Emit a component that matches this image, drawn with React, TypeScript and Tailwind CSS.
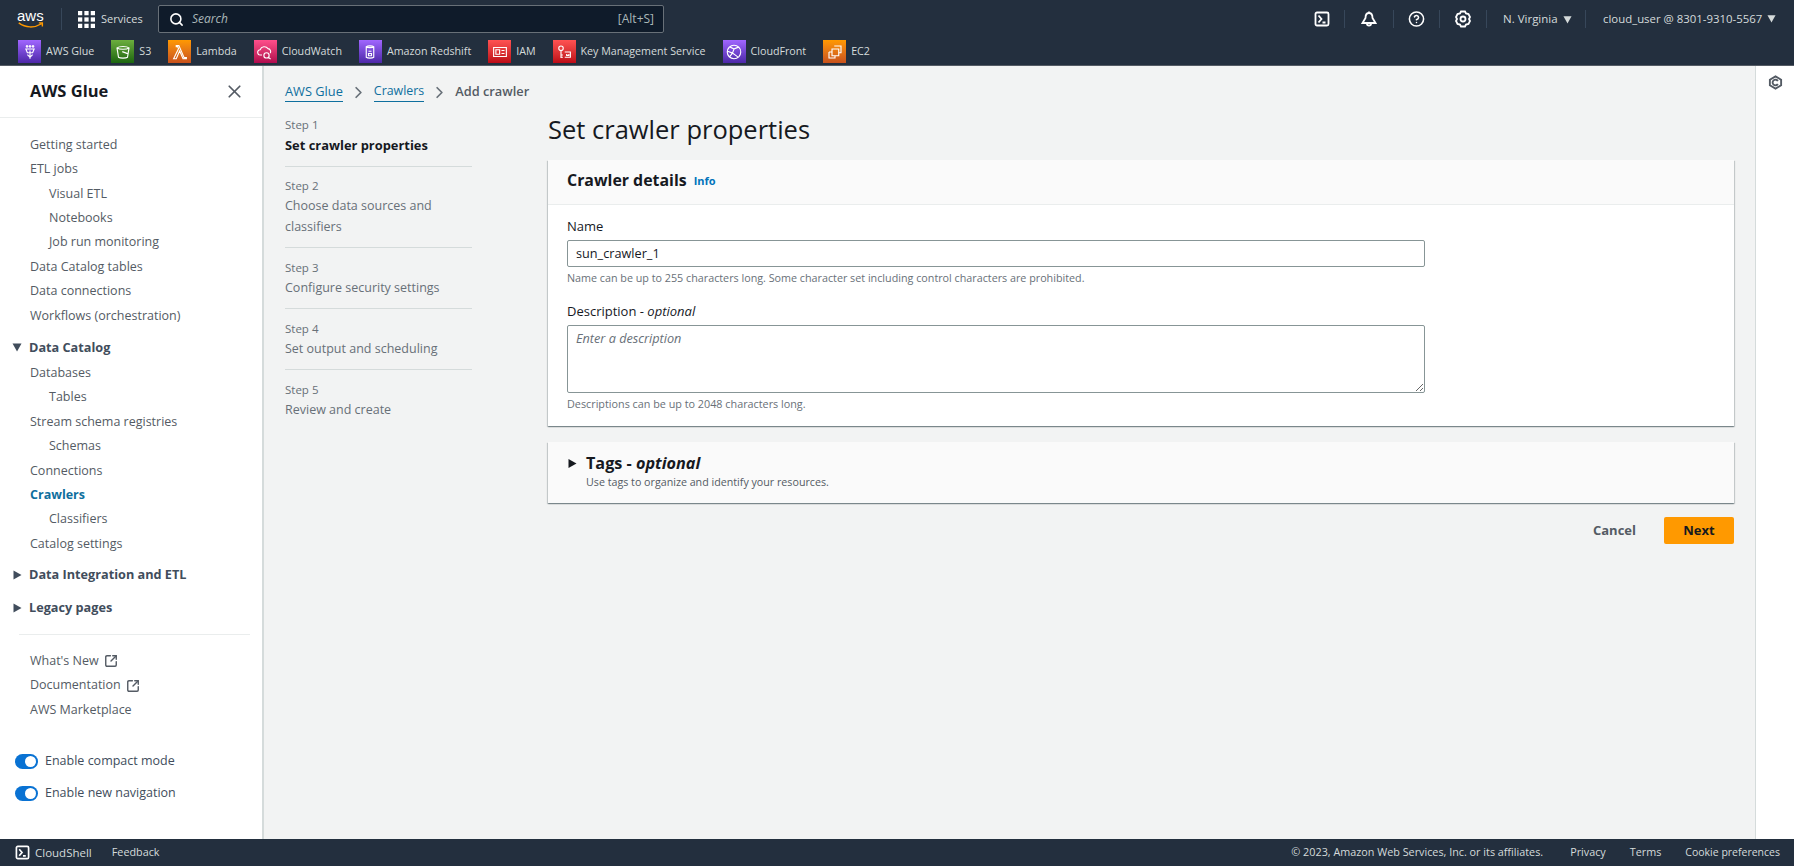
import { ChevronRight, Search, X, SquareArrowOutUpRight, CircleHelp } from "lucide-react";

const favorites = [
  {
    name: "AWS Glue",
    bg: "bg-linear-to-t from-[#4d27a8] to-[#a166ff]",
    icon: "M12 10v11M8 3.500a1 1 0 1 0 0.100 0M16 3.500a1 1 0 1 0 0.100 0M12 3.500a1 1 0 1 0 0.100 0M6.500 8h11l-2 5h-7zM8.500 15.500 12 19l3.500-3.500",
  },
  {
    name: "S3",
    bg: "bg-linear-to-t from-[#1b660f] to-[#6cae3e]",
    icon: "M4 6.500c3-2.500 13-2.500 16 0l-2 12.500c-2 1.500-10 1.500-12 0zM4 6.500c3 2.500 13 2.500 16 0M11 11.500l8 3",
  },
  {
    name: "Lambda",
    bg: "bg-linear-to-t from-[#c8511b] to-[#ff9900]",
    icon: "M7 3.500h3.500l7 16h3v1.500h-4.500l-4.500-10.500-4.500 10.500H3.500l6.500-13.500-1-2.500H7z",
  },
  {
    name: "CloudWatch",
    bg: "bg-linear-to-t from-[#b0084d] to-[#ff4f8b]",
    icon: "M8 16H6a3.500 3.500 0 0 1-.5-7A6 6 0 0 1 16 7.500a4 4 0 0 1 3 6M14 20a3.500 3.500 0 1 0 0-7 3.500 3.500 0 0 0 0 7zM16.500 19l3 2.500",
  },
  {
    name: "Amazon Redshift",
    bg: "bg-linear-to-t from-[#4d27a8] to-[#a166ff]",
    icon: "M7 5c2-1.500 8-1.500 10 0v14c-2 1.500-8 1.500-10 0zM7 5c2 1.500 8 1.500 10 0M10 11h4M10 14h4v3h-4z",
  },
  {
    name: "IAM",
    bg: "bg-linear-to-t from-[#bd0816] to-[#ff5252]",
    icon: "M3.500 6h17v12h-17zM6.500 9h5v6h-5zM14 10h4M14 14h4",
  },
  {
    name: "Key Management Service",
    bg: "bg-linear-to-t from-[#bd0816] to-[#ff5252]",
    icon: "M8 10a3 3 0 1 0 0-6 3 3 0 0 0 0 6zM8 10v10M8 16h2.500M8 19h2.500M13 12h7.500v7H13M15.500 14.500v2h3v-2",
  },
  {
    name: "CloudFront",
    bg: "bg-linear-to-t from-[#4d27a8] to-[#a166ff]",
    icon: "M12 21a9 9 0 1 0 0-18 9 9 0 0 0 0 18zM6 18.500l4-5 7 5M10 13.500 12 8l6-2.500M12 8 7 5.500M10 13.500 3.500 11",
  },
  {
    name: "EC2",
    bg: "bg-linear-to-t from-[#c8511b] to-[#ff9900]",
    icon: "M11 4h9v9h-3M8 8h9v9H8zM4 12h4M4 12v8h8v-3",
  },
];

const navTop = [
  { label: "Getting started" },
  { label: "ETL jobs" },
  { label: "Visual ETL", sub: true },
  { label: "Notebooks", sub: true },
  { label: "Job run monitoring", sub: true },
  { label: "Data Catalog tables" },
  { label: "Data connections" },
  { label: "Workflows (orchestration)" },
];

const navCatalog = [
  { label: "Databases" },
  { label: "Tables", sub: true },
  { label: "Stream schema registries" },
  { label: "Schemas", sub: true },
  { label: "Connections" },
  { label: "Crawlers", active: true },
  { label: "Classifiers", sub: true },
  { label: "Catalog settings" },
];

const steps = [
  { step: "Step 1", title: "Set crawler properties", active: true },
  { step: "Step 2", title: "Choose data sources and classifiers" },
  { step: "Step 3", title: "Configure security settings" },
  { step: "Step 4", title: "Set output and scheduling" },
  { step: "Step 5", title: "Review and create" },
];

function NavRow({ label, sub, active }: { label: string; sub?: boolean; active?: boolean }) {
  return (
    <div
      className={`h-[24.4px] flex items-center text-[12.5px] ${sub ? "pl-[49px]" : "pl-[30px]"} ${
        active ? "font-bold text-[#0f6f9e]" : "text-[#545b64]"
      }`}
    >
      {label}
    </div>
  );
}

function Caret({ open, size = "w-[10px] h-[10px]" }: { open?: boolean; size?: string }) {
  return (
    <svg viewBox="0 0 10 10" className={size}>
      <path d={open ? "M0.500 1.500h9L5 9.500z" : "M1.500 0.500l8 4.500-8 4.500z"} fill="currentColor" />
    </svg>
  );
}

function Toggle({ label }: { label: string }) {
  return (
    <div className="h-[32px] flex items-center gap-[7px] pl-[15px] text-[12.5px] text-[#414d5c]">
      <span className="w-[23px] h-[15px] rounded-full bg-[#0972d3] flex items-center justify-end pr-[2px]">
        <span className="w-[11px] h-[11px] rounded-full bg-white" />
      </span>
      {label}
    </div>
  );
}

function ShellIcon({ className }: { className: string }) {
  return (
    <svg viewBox="0 0 16 16" className={className} fill="none" stroke="currentColor" strokeWidth="1.800">
      <rect x="1.500" y="1.500" width="13" height="13" rx="1.500" />
      <path d="M4.500 4.500 7.500 8l-3 3.500M8.500 11.500h3" />
    </svg>
  );
}

export default function App() {
  return (
    <div className="h-[866px] w-[1794px] flex flex-col overflow-hidden bg-[#f2f3f3] font-['Open_Sans',sans-serif]">
      <header className="h-[66px] shrink-0 bg-[#232f3e] text-[#d5dbdb] border-b border-[#545b64]">
        <div className="h-[38px] flex items-center">
          <div className="w-[62px] pl-[17px] flex flex-col items-start border-r border-[#37475a] h-[22px] justify-center">
            <span className="text-[15px] leading-[13px] text-white font-['Liberation_Sans',sans-serif]">aws</span>
            <svg viewBox="0 0 30 8" className="w-[28px] h-[7px]">
              <path d="M1 1c8 6 18 6 26 1M24 1h4v4" fill="none" stroke="#ff9900" strokeWidth="1.600" />
            </svg>
          </div>
          <svg viewBox="0 0 16 16" className="ml-[16px] w-[17px] h-[17px] text-white" fill="currentColor">
            <rect x="0" y="0" width="4" height="4" />
            <rect x="6" y="0" width="4" height="4" />
            <rect x="12" y="0" width="4" height="4" />
            <rect x="0" y="6" width="4" height="4" />
            <rect x="6" y="6" width="4" height="4" />
            <rect x="12" y="6" width="4" height="4" />
            <rect x="0" y="12" width="4" height="4" />
            <rect x="6" y="12" width="4" height="4" />
            <rect x="12" y="12" width="4" height="4" />
          </svg>
          <span className="ml-[6px] text-[11px] w-[57px]">Services</span>
          <div className="w-[506px] h-[28px] rounded-[2px] border border-[#687078] bg-[#0f1b2a] flex items-center pl-[10px] pr-[9px] text-[12px] text-[#aab7b8]">
            <Search className="w-[15px] h-[15px] text-white" strokeWidth={2.500} />
            <span className="ml-[8px] italic">Search</span>
            <span className="ml-auto">[Alt+S]</span>
          </div>
          <div className="ml-auto flex items-center text-white">
            <div className="w-[46px] flex justify-center border-r border-[#37475a]">
              <ShellIcon className="w-[16px] h-[18px]" />
            </div>
            <div className="w-[49px] flex justify-center border-r border-[#37475a]">
              <svg viewBox="0 0 16 18" className="w-[16px] h-[18px]" fill="none" stroke="currentColor" strokeWidth="1.800">
                <path d="M8 1.500v1.500M8 3c-3 0-3.500 3-3.500 5L1.500 13h13l-3-5c0-2-.5-5-3.500-5zM6 14c0 2 4 2 4 0" />
              </svg>
            </div>
            <div className="w-[46px] flex justify-center border-r border-[#37475a]">
              <CircleHelp className="w-[17px] h-[18px]" strokeWidth={2.200} />
            </div>
            <div className="w-[47px] flex justify-center border-r border-[#37475a]">
              <svg viewBox="0 0 16 18" className="w-[16px] h-[18px]" fill="none" stroke="currentColor" strokeWidth="1.800">
                <path d="M6 1.500h4l1 2 2.500.5 1.500 3-1 2 1 2-1.500 3-2.500.5-1 2H6l-1-2-2.500-.5L1 11l1-2-1-2 1.500-3L5 3.500z" />
                <circle cx="8" cy="9" r="2.500" />
              </svg>
            </div>
            <div className="w-[99px] pl-[16px] flex items-center gap-[5px] text-[11.5px] text-[#d5dbdb] border-r border-[#37475a]">
              N. Virginia
              <Caret open size="w-[9px] h-[9px]" />
            </div>
            <div className="w-[208px] pl-[17px] flex items-center gap-[5px] text-[11.4px] text-[#d5dbdb]">
              cloud_user @ 8301-9310-5567
              <Caret open size="w-[9px] h-[9px]" />
            </div>
          </div>
        </div>
        <div className="h-[27px] flex items-center gap-[17px] pl-[18px]">
          {favorites.map((f) => (
            <div key={f.name} className="flex items-center gap-[5px] text-[10.7px] text-[#d5dbdb]">
              <span className={`w-[23px] h-[23px] flex items-center justify-center ${f.bg}`}>
                <svg viewBox="0 0 24 24" className="w-[18px] h-[18px]" fill="none" stroke="white" strokeWidth="1.500">
                  <path d={f.icon} />
                </svg>
              </span>
              {f.name}
            </div>
          ))}
        </div>
      </header>

      <div className="flex-1 flex min-h-0">
        <aside className="w-[264px] shrink-0 bg-white border-r-2 border-[#d5dbdb]">
          <div className="h-[52px] flex items-center justify-between pl-[30px] pr-[17px] border-b border-[#eaeded]">
            <span className="text-[16.5px] font-bold text-[#16191f]">AWS Glue</span>
            <X className="w-[21px] h-[21px] text-[#545b64]" strokeWidth={2} />
          </div>
          <div className="pt-[15px]">
            {navTop.map((n) => (
              <NavRow key={n.label} {...n} />
            ))}
          </div>
          <div className="mt-[5px] h-[28px] flex items-center gap-[7px] pl-[12px] text-[12.7px] font-bold text-[#414d5c]">
            <Caret open />
            Data Catalog
          </div>
          {navCatalog.map((n) => (
            <NavRow key={n.label} {...n} />
          ))}
          <div className="mt-[2px] h-[33px] flex items-center gap-[7px] pl-[12px] text-[12.7px] font-bold text-[#414d5c]">
            <Caret />
            Data Integration and ETL
          </div>
          <div className="h-[33px] flex items-center gap-[7px] pl-[12px] text-[12.7px] font-bold text-[#414d5c]">
            <Caret />
            Legacy pages
          </div>
          <div className="mt-[10px] ml-[19px] mr-[12px] border-t border-[#eaeded]" />
          <div className="mt-[14px]">
            {["What's New", "Documentation"].map((l) => (
              <div key={l} className="h-[24.4px] flex items-center gap-[5px] pl-[30px] text-[12.5px] text-[#545b64]">
                {l}
                <SquareArrowOutUpRight className="w-[14px] h-[14px]" strokeWidth={2.400} />
              </div>
            ))}
            <NavRow label="AWS Marketplace" />
          </div>
          <div className="mt-[23px]">
            <Toggle label="Enable compact mode" />
            <Toggle label="Enable new navigation" />
          </div>
        </aside>

        <main className="flex-1 min-w-0 pl-[20px] pr-[21px]">
          <nav className="h-[49px] flex items-center gap-[6px] pl-[1px] text-[12.8px] pt-[3px]">
            <span className="text-[#0f6f9e] border-b border-[#0f6f9e]">AWS Glue</span>
            <ChevronRight className="w-[19px] h-[19px] text-[#687078]" strokeWidth={2.200} />
            <span className="text-[12.4px] text-[#0f6f9e] border-b border-[#0f6f9e]">Crawlers</span>
            <ChevronRight className="w-[19px] h-[19px] text-[#687078]" strokeWidth={2.200} />
            <span className="font-semibold text-[#545b64]">Add crawler</span>
          </nav>
          <div className="flex">
            <ol className="w-[188px] shrink-0 pl-[1px] text-[12.5px]">
              {steps.map((s, i) => (
                <li key={s.step} className={`pb-[10px] mb-[9.5px] ${i < 4 ? "border-b border-[#d5dbdb]" : ""}`}>
                  <div className="text-[11.5px] leading-[20px] text-[#687078]">{s.step}</div>
                  <div className={`leading-[20.5px] ${s.active ? "font-bold text-[12.9px] text-[#16191f]" : "text-[#687078]"}`}>
                    {s.title}
                  </div>
                </li>
              ))}
            </ol>
            <div className="ml-[76px] flex-1 min-w-0">
              <h1 className="h-[45px] pb-[17px] flex items-center text-[25.5px] text-[#16191f]">Set crawler properties</h1>
              <section className="bg-white shadow-[0_1px_1px_0_rgba(0,28,36,0.3),1px_1px_1px_0_rgba(0,28,36,0.15),-1px_1px_1px_0_rgba(0,28,36,0.15)]">
                <div className="h-[45px] pb-[3px] flex items-center gap-[7px] pl-[19px] bg-[#fafafa] border-b border-[#eaeded]">
                  <span className="text-[15.9px] font-bold text-[#16191f]">Crawler details</span>
                  <span className="text-[11px] font-bold text-[#0073bb] mt-[2px]">Info</span>
                </div>
                <div className="pt-[11px] pl-[19px] pb-[14px]">
                  <label className="block text-[13px] leading-[20px] text-[#16191f]">Name</label>
                  <div className="mt-[4px] w-[858px] h-[27px] flex items-center px-[8px] bg-white border border-[#879596] rounded-[2px] text-[12.7px] text-[#16191f]">
                    sun_crawler_1
                  </div>
                  <p className="mt-[3px] text-[10.75px] leading-[16px] text-[#687078]">
                    Name can be up to 255 characters long. Some character set including control characters are prohibited.
                  </p>
                  <label className="block mt-[15px] text-[13px] leading-[20px] text-[#16191f]">
                    Description - <i>optional</i>
                  </label>
                  <textarea
                    readOnly
                    placeholder="Enter a description"
                    className="block mt-[4px] w-[858px] h-[68px] px-[8px] py-[3px] bg-white border border-[#879596] rounded-[2px] text-[12.7px] italic placeholder:text-[#687078] outline-none"
                  />
                  <p className="mt-[3px] text-[10.8px] leading-[16px] text-[#687078]">
                    Descriptions can be up to 2048 characters long.
                  </p>
                </div>
              </section>
              <section className="mt-[16px] h-[61px] bg-[#fafafa] pl-[19px] pt-[10px] shadow-[0_1px_1px_0_rgba(0,28,36,0.3),1px_1px_1px_0_rgba(0,28,36,0.15),-1px_1px_1px_0_rgba(0,28,36,0.15)]">
                <div className="flex items-center gap-[9px] h-[22px] text-[16.2px] font-bold text-[#16191f]">
                  <Caret size="w-[10px] h-[11px]" />
                  <span>
                    Tags - <i>optional</i>
                  </span>
                </div>
                <p className="pl-[19px] text-[10.7px] leading-[16px] text-[#545b64]">Use tags to organize and identify your resources.</p>
              </section>
              <div className="mt-[14px] flex items-center justify-end text-[13px] font-bold">
                <span className="text-[#545b64] mr-[28px]">Cancel</span>
                <span className="w-[70px] h-[27px] flex items-center justify-center rounded-[2px] bg-[#ff9900] text-[#16191f]">Next</span>
              </div>
            </div>
          </div>
        </main>

        <aside className="w-[39px] shrink-0 bg-white border-l border-[#d5dbdb] flex justify-center pt-[9px]">
          <svg viewBox="0 0 16 16" className="w-[15px] h-[15px] text-[#545b64]" fill="none" stroke="currentColor" strokeWidth="2">
            <path d="M8 1.500 14 5v6l-6 3.500L2 11V5z" />
            <path d="M10.500 6.500a3 3 0 1 0 0 3" />
          </svg>
        </aside>
      </div>

      <footer className="h-[27px] shrink-0 bg-[#232f3e] text-[#d5dbdb] text-[10.8px] flex items-center pl-[15px] pr-[14px]">
        <ShellIcon className="w-[15px] h-[15px] text-white" />
        <span className="ml-[5px] text-[11.5px]">CloudShell</span>
        <span className="ml-[20px]">Feedback</span>
        <span className="ml-auto">© 2023, Amazon Web Services, Inc. or its affiliates.</span>
        <span className="ml-[27px]">Privacy</span>
        <span className="ml-[24px]">Terms</span>
        <span className="ml-[24px] text-[10.5px]">Cookie preferences</span>
      </footer>
    </div>
  );
}
